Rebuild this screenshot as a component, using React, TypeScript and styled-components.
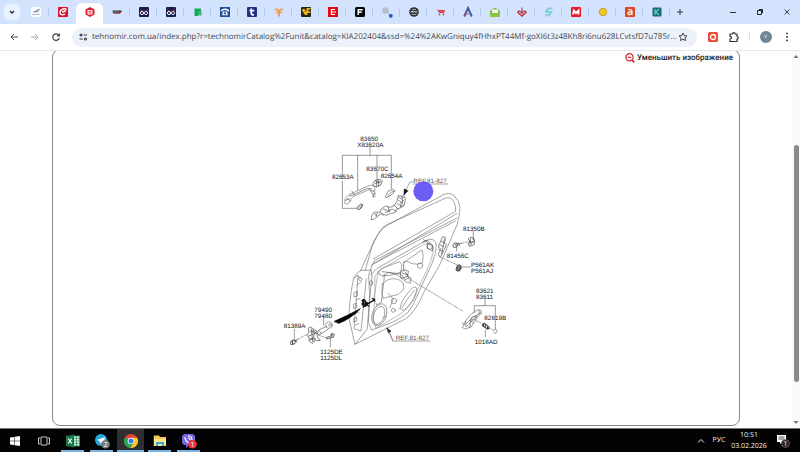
import React from "react";
import styled, { createGlobalStyle } from "styled-components";

const GlobalStyle = createGlobalStyle`
  * { box-sizing: border-box; }
  html, body { margin: 0; padding: 0; overflow: hidden; }
  body {
    background: #fff;
    font-family: "Open Sans", "Noto Sans", sans-serif;
    text-rendering: geometricPrecision;
  }
  button, input { text-rendering: inherit; }
  button { border: 0; padding: 0; background: none; font: inherit; color: inherit; }
`;

const Screen = styled.div`
  display: flex;
  flex-direction: column;
  height: 100vh;
`;

/* ---------- tab strip ---------- */

const TabStrip = styled.header`
  display: flex;
  align-items: stretch;
  height: 24px;
  flex: none;
  padding-left: 4px;
  background: #d3e3fd;
`;

const TabSearch = styled.button`
  align-self: center;
  display: grid;
  place-items: center;
  width: 16px;
  height: 16px;
  margin-right: 2px;
  border-radius: 5px;
  background: #e9f1fe;
`;

const TabList = styled.div`
  display: flex;
  flex: 0 1 648px;
  min-width: 0;
`;

const Tab = styled.button<{ $active?: boolean; $divider?: boolean }>`
  position: relative;
  display: grid;
  place-items: center;
  flex: 1 1 0;
  min-width: 0;
  margin-top: ${(p) => (p.$active ? "3px" : "0")};
  padding-bottom: ${(p) => (p.$active ? "3px" : "0")};
  border-radius: 6px 6px 0 0;
  background: ${(p) => (p.$active ? "#fff" : "transparent")};

  &::after {
    content: "";
    display: ${(p) => (p.$divider ? "block" : "none")};
    position: absolute;
    right: 0;
    top: 7px;
    width: 1px;
    height: 10px;
    background: #b3caf2;
  }
`;

const NewTab = styled.button`
  display: grid;
  place-items: center;
  width: 19px;
`;

const WindowButtons = styled.div`
  display: flex;
  margin-left: auto;
`;

const WindowButton = styled.button`
  display: grid;
  place-items: center;
  width: 27px;
`;

/* ---------- toolbar ---------- */

const Toolbar = styled.nav`
  display: flex;
  align-items: center;
  flex: none;
  height: 27px;
  padding: 0 3px;
  border-bottom: 1px solid #e4e8ee;
  background: #fff;
`;

const ToolButton = styled.button<{ $w?: number }>`
  display: grid;
  place-items: center;
  flex: none;
  width: ${(p) => p.$w ?? 21}px;
  height: 18px;
`;

const AddressBar = styled.div`
  display: flex;
  align-items: center;
  flex: 1;
  min-width: 0;
  height: 19px;
  margin: 0 5px 0 6px;
  padding: 0 9px 0 2px;
  border-radius: 10px;
  background: #edf2fa;
`;

const Address = styled.input`
  flex: 1;
  min-width: 0;
  padding: 0;
  border: 0;
  outline: 0;
  background: none;
  color: #44484d;
  font: 8px/16px "Open Sans", "Noto Sans", sans-serif;
  text-overflow: ellipsis;
`;

const ToolDivider = styled.span`
  width: 1px;
  height: 8px;
  margin: 0 5px;
  background: #c9dcfb;
`;

const Avatar = styled.span`
  display: grid;
  place-items: center;
  width: 12px;
  height: 12px;
  border-radius: 50%;
  background: #6d8796;
  color: #fff;
  font-size: 5px;
`;

/* ---------- page ---------- */

const Page = styled.main`
  display: flex;
  flex: 1;
  min-height: 0;
  overflow: hidden;
`;

const PageBody = styled.div`
  display: flex;
  flex: 1;
  min-width: 0;
  padding: 0 52px 2px;
`;

const Frame = styled.section`
  display: flex;
  flex-direction: column;
  flex: 1;
  min-width: 0;
  margin-top: -2px;
  border: 1px solid #8b8b8b;
  border-radius: 8px;
`;

const ShrinkButton = styled.button`
  display: flex;
  align-items: center;
  align-self: flex-end;
  gap: 2px;
  height: 14px;
  margin: 1px 6px 0 0;
  color: #1c1c1c;
  font: 500 8px/14px Roboto, "Open Sans", sans-serif;
`;

const Diagram = styled.svg`
  display: block;
  align-self: center;
  width: 270px;
  max-width: 100%;
  margin-top: 60px;
  font-family: "Liberation Sans", Arial, sans-serif;
  font-size: 19px;
`;

const ScrollBar = styled.aside`
  display: flex;
  flex-direction: column;
  align-items: center;
  width: 8px;
  padding: 3px 0;
  background: #fafafa;
`;

const ScrollTrack = styled.div`
  display: grid;
  grid-template-rows: 23fr 63fr 10fr;
  flex: 1;
  width: 5px;
`;

const ScrollThumb = styled.div`
  grid-row: 2;
  border-radius: 3px;
  background: #8a8a8a;
`;

/* ---------- taskbar ---------- */

const Taskbar = styled.footer`
  display: flex;
  align-items: stretch;
  flex: none;
  height: 24px;
  border-top: 1px solid #777;
  background: #030303;
  color: #f2f2f2;
`;

const TaskButton = styled.button<{ $running?: boolean; $active?: boolean }>`
  position: relative;
  display: grid;
  place-items: center;
  width: 29px;
  background: ${(p) => (p.$active ? "linear-gradient(90deg, transparent 1px, #2f2f31 1px, #2f2f31 28px, transparent 28px)" : "none")};

  &::after {
    content: "";
    display: ${(p) => (p.$running ? "block" : "none")};
    position: absolute;
    left: ${(p) => (p.$active ? "1px" : "3px")};
    right: ${(p) => (p.$active ? "1px" : "3px")};
    bottom: 0;
    height: 2px;
    background: #78b5e6;
  }
`;

const Tray = styled.div`
  display: flex;
  align-items: center;
  margin-left: auto;
  padding-right: 3px;
  font-size: 7px;
  line-height: 11px;
`;

const TrayButton = styled.button<{ $w: number }>`
  display: grid;
  place-items: center;
  width: ${(p) => p.$w}px;
  text-align: center;
`;

/* ---------- favicons ---------- */

const Fav = ({ children }: { children: React.ReactNode }) => (
  <svg width="12" height="12" viewBox="0 0 12 12" aria-hidden="true">{children}</svg>
);

const EyesIcon = () => (
  <Fav>
    <rect x="1" y="1" width="10" height="10" rx="1" fill="#16204e" />
    <circle cx="4" cy="7" r="1.6" fill="none" stroke="#fff" />
    <circle cx="8" cy="7" r="1.6" fill="none" stroke="#e9dfe9" />
    <path d="M2.600 4 5 5.200M7.400 5 9.800 3.600" stroke="#e33b4b" strokeWidth=".9" />
  </Fav>
);

const favicons: { name: string; icon: React.ReactNode }[] = [
  { name: "Каталог", icon: <Fav><rect x="1" y="1" width="10" height="10" fill="#fafbfc" /><path d="M3.500 6 9.500 3 7.700 6z" fill="#a5b0bd" stroke="#7b8794" strokeWidth=".7" /><path d="M1.700 8.500h8.500" stroke="#a9c0dc" /></Fav> },
  { name: "C", icon: <Fav><rect x="1" y="1" width="10" height="10" rx="1" fill="#d8122d" /><path d="M9.500 3.500C6.500 1.700 3 4 3 6.400c0 2.400 2.500 3 5 1.500M5 6l4-1.200" fill="none" stroke="#fff" strokeWidth="1.500" /></Fav> },
  { name: "Технoмир", icon: <Fav><path d="M6 1 10.500 3.400v5.200L6 11 1.500 8.600V3.400z" fill="#df1f2f" /><path d="M3.500 4h5v4.500h-5z" fill="#fff" /><path d="M4.500 5.300h3M4.500 7h3" stroke="#df1f2f" strokeWidth=".9" /></Fav> },
  { name: "BMP", icon: <Fav><path d="M1.500 4.500h9l-.5 2-1 1h-7z" fill="#34343b" /><path d="M5 7.500h3l3-2.500" fill="none" stroke="#d2404f" strokeWidth=".9" /><path d="M2 6h6" stroke="#a7a2a6" strokeWidth=".7" /></Fav> },
  { name: "Exist 1", icon: <EyesIcon /> },
  { name: "Exist 2", icon: <EyesIcon /> },
  { name: "Sheets", icon: <Fav><path d="M2.500 2.500h6.500V5H6v5H2.500z" fill="#13a85d" /><path d="M6 5h3.500v4.500H6z" fill="#35b475" /></Fav> },
  { name: "Телефон", icon: <Fav><rect x="1" y="1" width="10" height="10" fill="#1d4e96" /><path d="M2.500 5.500c0-3 7-3 7 0" fill="none" stroke="#fff" strokeWidth="1.300" /><path d="M3 9.300 4 5.500h4l1 3.800z" fill="#e9f0fb" /><circle cx="6" cy="7.300" r="1.100" fill="#1d4e96" /></Fav> },
  { name: "t", icon: <Fav><rect x="1" y="1" width="10" height="10" rx="1" fill="#262e82" /><path d="M5.300 2.500v5.200q0 1.400 2.700 1M3.500 4.600h4.700" fill="none" stroke="#fff" strokeWidth="1.700" /></Fav> },
  { name: "Пальма", icon: <Fav><path d="M6 4.500v6" stroke="#e88a3e" strokeWidth="1.600" /><path d="M6 4Q3 1 1.500 4q2-.6 4.500.6Q3 5 3 8q1-2 3-3 2 1 3 3 0-3-3-3.400Q8.500 3.400 10.500 4 9 1 6 4z" fill="#ee9c50" stroke="#ee9c50" strokeWidth=".6" /></Fav> },
  { name: "Авто", icon: <Fav><rect x="1" y="1" width="10" height="10" rx="1" fill="#2b2718" /><path d="M10.500 2H6.500v3L3 6.500 5 9h2.500l-.5-2h3.500V5.500H8.500v-2h2z" fill="#f1b91b" /><circle cx="3.800" cy="4.300" r="1.600" fill="#f1b91b" /></Fav> },
  { name: "Красный", icon: <Fav><rect x="1" y="1" width="10" height="10" fill="#e20a12" /><path d="M8 3.500H4.500v5H8M4.500 6H7" fill="none" stroke="#fff" strokeWidth="1.200" /><path d="M8 5v2" stroke="#fff" /></Fav> },
  { name: "F", icon: <Fav><rect x="1" y="1" width="10" height="10" rx="1.500" fill="#08090a" /><path d="M4.200 9V3.700h4.500M4.200 6.300h3.500" fill="none" stroke="#fff" strokeWidth="1.400" /></Fav> },
  { name: "Поиск деталей", icon: <Fav><circle cx="4.500" cy="4.500" r="2.700" fill="#ccd7df" stroke="#a1acb6" /><circle cx="4.500" cy="4.500" r="1" fill="none" stroke="#8e9daa" strokeWidth=".7" /><path d="m6.500 6.500 2 2" stroke="#8e9daa" /><circle cx="9.800" cy="9.800" r="1.900" fill="#1753ba" /></Fav> },
  { name: "Эмблема", icon: <Fav><circle cx="6" cy="6" r="4.800" fill="#303237" /><path d="M4 3.600h4M3.500 8.400h5" stroke="#c9cdc9" strokeWidth=".8" /><path d="M2.500 6.500 4 5l1 1.500L6.500 5 8 6.500 9.500 5" fill="none" stroke="#eee" /></Fav> },
  { name: "Корзина", icon: <Fav><path d="M2 3.500 4 4h6l-1 3H4.500z" fill="#d73840" /><path d="M4.500 7.500v1.700M8.500 7.500v1.700" stroke="#c93841" strokeWidth="1.400" /><path d="M4.500 5.500h4" stroke="#e98087" strokeWidth=".6" /></Fav> },
  { name: "A", icon: <Fav><path d="M2.200 10.500 6 2l3.800 8.500" fill="none" stroke="#2467bc" strokeWidth="2" /><path d="M6 2.500 2.700 10M4 8h3" fill="none" stroke="#d9354d" strokeWidth=".9" /></Fav> },
  { name: "Почта", icon: <Fav><path d="m1 5 5-3.500L11 5v6H1z" fill="#78b73b" /><path d="M3 3.500h6V7H3z" fill="#f4f6ed" /><path d="M1 6q5 4 10 0v5H1z" fill="#8ac63f" /></Fav> },
  { name: "Деталь", icon: <Fav><path d="M6 1.500v5.500M4 5l2 2.500L8 5" fill="none" stroke="#8a4b55" strokeWidth="1.200" /><path d="M3.500 4.500 2 6.500l4 3.500 4-3.500-1.500-2" fill="none" stroke="#cf2d36" strokeWidth="1.500" /></Fav> },
  { name: "S", icon: <Fav><path d="M9.500 2.500H5L3 6h5L6.500 9H2.500" fill="none" stroke="#66cddb" strokeWidth="1.600" /><path d="M4 2h6M2 10h5" stroke="#e9b6bd" strokeWidth=".8" /></Fav> },
  { name: "M", icon: <Fav><rect x="1" y="1" width="10" height="10" rx="1" fill="#e41b2d" /><path d="M3 8.500 4 4.500l2 2.500 2.500-2.500V8.500" fill="none" stroke="#fff" strokeWidth="1.900" /></Fav> },
  { name: "Золото", icon: <Fav><circle cx="6" cy="6" r="3.800" fill="#f5c51b" stroke="#bea343" /></Fav> },
  { name: "a", icon: <Fav><rect x="1" y="1" width="10" height="10" rx="1" fill="#dd4826" /><path d="M4 4q4-1 4 1v4M8 6C4 5.700 3.200 7 4 8.200q2 1.300 4-1" fill="none" stroke="#fff" strokeWidth="1.200" /></Fav> },
  { name: "K", icon: <Fav><rect x="1.500" y="1.500" width="9" height="9" rx="1" fill="#1d6870" /><path d="M4 3v6M8 3 4.800 6 8 9" fill="none" stroke="#4dd3ca" strokeWidth="1.300" /></Fav> },
];

/* ---------- parts diagram ---------- */

type LabelProps = { x: number; y: number; children: string };

const PartLabel = ({ x, y, children }: LabelProps) => (
  <text x={x} y={y} fill="#111">{children}</text>
);

const RefLink = ({ x, y, children }: LabelProps) => (
  <a href="#ref-81-827">
    <text x={x} y={y} fill="#555">{children}</text>
    <path d={`M${x - 2} ${y + 4}h106`} stroke="#777" strokeWidth="2" />
  </a>
);

const DoorDiagram = () => (
  <Diagram viewBox="0 0 810 735" role="img" aria-label="Схема задней двери">
    <g fill="none" stroke="#777" strokeWidth="2" strokeLinejoin="round" strokeLinecap="round">
      {/* outside handle */}
      <g transform="translate(177 0)">
        <path d="M150 67v24M67 161V91h147v100M113 91v105M171 91v75M67 168v82h43" stroke="#666" />
        <path d="M75 228c-2-8 5-14 14-20l55-25q10-5 18 0l4 12q-3 7-10 3l-9-4-48 21-10 13-6 10-8-3z" />
        <path d="m88 213 14-4 40-19 13 2M83 221l10 7M151 195l8 15 7-4-5-10M103 208l-7-9M76 226l10-4" stroke="#555" />
        <path d="m160 175 5-9 14-3 8 4-4 12-13 7-10-5zM167 169l14 4M166 176l14-6M170 184v-16M176 183v-18" stroke="#444" />
        <path d="m197 213 7-14 14-6 7 4-9 12-17 9zM204 211l11-10 7-2M162 205l-3 12 7-4" stroke="#555" />
        <path d="m112 246 9-9 8 2-5 10-9 5zM116 247l9-8M120 252l6-10" stroke="#444" />
        <path d="m156 271 7-10 17 1 4-10 12-9 15 4 11-5 9-13 4-18 9 3 6-3 6 9-2 17-7 9-18 7-4 10-13 2-14 6-12-5-12 6-10 10-10 2z" stroke="#555" />
        <path d="m164 265 9 11M181 262l9 9M190 252l13 5 14-4 12 6M204 246l5 14M222 240l13 13M235 225l10 8-5 12 13-5M236 217l9 4 7-5M242 233l9-7M232 236l12 7M246 214l2 22M196 262l13-4M173 264l-6 9" stroke="#555" />
        <path d="M278 171h-8l-14 27" />
        <path d="m252 209 1-17 10 5z" fill="#111" stroke="#111" />
      </g>
      {/* door panel */}
      <g transform="translate(237 180)">
        <path d="M62 256 90 195l23-45q12-21 32-31L312 28q18-7 31 5 16 15 17 34-1 27-9 52l-28 66-24 55-47 81q-17 42-42 70-11 11-30 19L45 478 27 400q0-52 14-121 10-18 21-23z" />
        <path d="m76 255 24-84 21-34q7-12 18-17L315 40q16-5 23 5 9 10 9 34L100 222M91 254l12-27 248-128M93 241 350 86M103 235 346 108" />
        <path d="m92 270 18-19 128-73q16-12 30-15 18-2 21 17 0 25-13 55l-42 92q-12 32-30 55-20 17-47 30l-62 23-10-23 4-70 7-69-3-20" />
        <path d="m105 273 14-17 118-69q20-15 35-12 11 5 7 27-4 24-18 53l-36 75q-15 36-44 57l-73 43-8-27 5-84zM115 258l-13 78 9 27" stroke="#999" />
        <path d="M62 256h30l-6 14 3 62-7 100-37 46M42 279l12-8 7 10M54 272 42 431l21 7 16-157M43 323l9-4v14l-9 3zM42 357l8-2v13l-8 2zM43 399l7-2v11l-8 3zM61 277l7 5-6 6-7-5zM50 300l13-8M48 345l12-5M47 386l11-5M46 420l10-4" />
        <path d="m117 267q-2-13 13-19l49-18 7 10-4 22-35 10-22-1zM193 231l52-36q7 10 2 39-12 6-31 2l-15-7zM127 297q14-16 35-16 15 0 27 12l3 19-17 16-46 12q-6-19-2-43zM128 276l18-14 26 8 28 22 13 2" />
        <path d="M180 370q4-25 20-42l18-20q10-5 12 3-1 22-11 37l-20 22q-13 11-19 0zM187 367l14-23 22-28M134 268l-10 84-15 8M145 325l15 18-11 25" />
        <ellipse cx="118" cy="389" rx="21" ry="34" transform="rotate(20 118 389)" /><ellipse cx="117" cy="391" rx="16" ry="28" transform="rotate(20 117 391)" />
        <circle cx="162" cy="348" r="8" /><circle cx="160" cy="376" r="6" /><circle cx="240" cy="242" r="8" /><circle cx="269" cy="185" r="8" /><ellipse cx="93" cy="294" rx="5" ry="7" />
        <path d="m182 260 11-6 13 5-5 16-17 5zM185 270l11 15 10-7-11-18M186 264l19 6M191 231v26M201 273l13 7-4 10M127 260l55 7M263 174l15 8-1 16-14-8zM249 173l13-8 8 8M250 164l12 7" stroke="#555" />
        <path d="m309 155 8 3-4 17 7 4-18 36-8-6 8-18-6-4zM304 169l10 5M300 180l12 5M296 193l12 6M313 162l-8 45" stroke="#555" />
        <path d="M205 280 368 378M298 215l59 27" strokeDasharray="12 4 3 4" />
        <path d="m66 347 6-4 6 9 8 3 16-10M68 350l2 16 8-7 8 4M72 343l-2 22M77 348v16M66 357h17M97 341l7 2-2 5" stroke="#111" strokeWidth="4" />
        <path d="M159 465 143 434" />
        <path d="m141 429 12 10-7 4z" fill="#111" stroke="#111" />
      </g>
      {/* latch, bolts and inside handle */}
      <g transform="translate(507 270)">
        <path d="M130 49v25M80 108v-12M95 156h26M165 253v19M133 293v-21h63v71M166 365v-20" stroke="#666" />
        <path d="m69 88 7-5 6 3-1 9-8 3zM82 88l12-3M74 85l5 9M80 84l4 9M86 84l3 7" stroke="#333" />
        <path d="m95 85 24-7" strokeDasharray="7 4" />
        <path d="M115 71q8-9 17-1l1 19-15 5-4-9 7-4zM129 73l6 5M122 72l-2 14M118 81h14M121 90l8-11" stroke="#444" />
        <ellipse cx="86" cy="159" rx="7" ry="10" fill="#999" stroke="#333" transform="rotate(24 86 159)" /><path d="m84 152-3 15M91 153l-4 15" stroke="#222" />
        <path d="m101 329 8-15 16-18 18-12 10 2 1 9-13 13-17 27-17 7-9-4zM109 326l19-19 24-14M120 338l2-24M130 323l-8-5M108 335l-1-16M125 307q7-5 17-3l-6 10-13 1zM97 324l8 6M147 286v13M112 333l28-31" stroke="#666" />
        <path d="m138 317 21 10M176 339l15 7" strokeDasharray="6 4" />
        <path d="m158 329 6-4 14 12-4 6-14-9zM162 325l-2 8M168 328l-3 8M174 334l-3 7" stroke="#222" strokeWidth="3" />
        <path d="m190 347 7-5 5 4-4 8q-5 3-8-1" />
      </g>
      {/* hinge check arm */}
      <g transform="translate(27 495)">
        <path d="M161 81v25M73 118v33M181 171v-27" stroke="#666" />
        <path d="m193 94 39-18 39-20q-25 28-64 44z" fill="#050505" stroke="#050505" />
        <circle cx="177" cy="105" r="10" /><circle cx="180" cy="105" r="4" /><path d="m170 109-24 11-5 9 6 6 28-18M148 122l5 8" stroke="#555" />
        <path d="m116 114 7-4 6 7 10 5 4 20 8 9-15 1-9 8-10-7v-12l-7-5 6-8zM121 124l12 1-2 18-11 4M124 116l4 39M117 137l21-7M120 149l14-3M129 120l9 9" stroke="#444" /><circle cx="128" cy="125" r="3" /><circle cx="132" cy="147" r="4" />
        <path d="m62 155 9-5 7 5-5 7-9 2zM65 153l5 9M73 153l10-5M68 150v12M77 151l3 5" stroke="#222" />
        <path d="m83 148 25-14" strokeDasharray="8 4" />
        <path d="m170 142 13-4 1-7 9 2-3 9-19 4zM186 132v9" stroke="#222" /><path d="m146 136 22 7" strokeDasharray="6 4" />
      </g>
      <path d="M402 648h-7l-14-34" />
    </g>

    <PartLabel x={298} y={47}>83650</PartLabel>
    <PartLabel x={289} y={65}>X83620A</PartLabel>
    <PartLabel x={316} y={138}>83670C</PartLabel>
    <PartLabel x={213} y={163}>82653A</PartLabel>
    <PartLabel x={359} y={158}>82654A</PartLabel>
    <PartLabel x={606} y={319}>81350B</PartLabel>
    <PartLabel x={557} y={399}>81456C</PartLabel>
    <PartLabel x={630} y={427}>P561AK</PartLabel>
    <PartLabel x={630} y={445}>P561AJ</PartLabel>
    <PartLabel x={645} y={505}>83621</PartLabel>
    <PartLabel x={645} y={523}>83611</PartLabel>
    <PartLabel x={670} y={586}>82619B</PartLabel>
    <PartLabel x={641} y={657}>1018AD</PartLabel>
    <PartLabel x={160} y={561}>79490</PartLabel>
    <PartLabel x={160} y={579}>79480</PartLabel>
    <PartLabel x={68} y={610}>81389A</PartLabel>
    <PartLabel x={178} y={686}>1125DE</PartLabel>
    <PartLabel x={178} y={704}>1125DL</PartLabel>
    <RefLink x={457} y={173}>REF.81-827</RefLink>
    <RefLink x={404} y={644}>REF.81-827</RefLink>
    <circle cx="487" cy="199" r="30" fill="#6d5df4" />
  </Diagram>
);

const url =
  "tehnomir.com.ua/index.php?r=technomirCatalog%2Funit&catalog=KIA202404&ssd=%24%2AKwGniquy4fHhxPT44Mf-goXI6t3z48Kh8ri6nu628LCvtsfD7u785r...";

export default function App() {
  return (
    <Screen>
      <GlobalStyle />
      <TabStrip>
        <TabSearch aria-label="Поиск вкладок">
          <svg width="8" height="8" viewBox="0 0 8 8" fill="none" stroke="#26313f" strokeWidth="1.300"><path d="m2 3 2 2 2-2" /></svg>
        </TabSearch>
        <TabList>
          {favicons.map((f, i) => (
            <Tab key={f.name} aria-label={f.name} $active={i === 2} $divider={i !== 1 && i !== 2}>{f.icon}</Tab>
          ))}
        </TabList>
        <NewTab aria-label="Новая вкладка">
          <svg width="8" height="8" viewBox="0 0 8 8" stroke="#333b47"><path d="M4 1v6M1 4h6" /></svg>
        </NewTab>
        <WindowButtons>
          <WindowButton aria-label="Свернуть"><svg width="8" height="8" viewBox="0 0 8 8" stroke="#333"><path d="M1 4.500h6" /></svg></WindowButton>
          <WindowButton aria-label="Восстановить"><svg width="8" height="8" viewBox="0 0 8 8" fill="none" stroke="#222"><path d="M1.500 2.500h4v4h-4zM3 1.500h3.500V5" /></svg></WindowButton>
          <WindowButton aria-label="Закрыть"><svg width="8" height="8" viewBox="0 0 8 8" stroke="#333" strokeWidth=".9"><path d="m1.500 1.500 5 5M6.500 1.500l-5 5" /></svg></WindowButton>
        </WindowButtons>
      </TabStrip>

      <Toolbar>
        <ToolButton aria-label="Назад"><svg width="10" height="10" viewBox="0 0 10 10" fill="none" stroke="#444"><path d="M9 5H2M5 2 2 5l3 3" /></svg></ToolButton>
        <ToolButton aria-label="Вперёд"><svg width="10" height="10" viewBox="0 0 10 10" fill="none" stroke="#aaa"><path d="M1 5h7M5 2l3 3-3 3" /></svg></ToolButton>
        <ToolButton aria-label="Обновить"><svg width="10" height="10" viewBox="0 0 10 10" fill="none" stroke="#444" strokeWidth="1.200"><path d="M8 3.500A3.300 3.300 0 1 0 8.300 6M8.300 1.500V4H5.800" /></svg></ToolButton>
        <AddressBar>
          <ToolButton $w={18} aria-label="Сведения о сайте">
            <svg width="10" height="10" viewBox="0 0 10 10" fill="none" stroke="#3d4045" strokeWidth="1.100"><circle cx="3" cy="3" r="1" /><path d="M5.500 3H9M1.500 7H5" /><circle cx="7.500" cy="7" r="1" /></svg>
          </ToolButton>
          <Address aria-label="Адресная строка" defaultValue={url} />
          <ToolButton $w={10} aria-label="Добавить в закладки">
            <svg width="10" height="10" viewBox="0 0 10 10" fill="none" stroke="#333" strokeWidth=".9"><path d="m5 1 1.200 2.600 2.800.3L7 5.800 7.500 8.600 5 7.200 2.500 8.600 3 5.800 1 3.900l2.800-.3z" /></svg>
          </ToolButton>
        </AddressBar>
        <ToolButton aria-label="Расширение">
          <svg width="10" height="10" viewBox="0 0 10 10"><rect width="10" height="10" rx="1.500" fill="#ed4b36" /><circle cx="5" cy="5" r="2.500" fill="none" stroke="#fff" strokeWidth="1.300" /></svg>
        </ToolButton>
        <ToolButton aria-label="Расширения">
          <svg width="12" height="12" viewBox="0 0 12 12" fill="none" stroke="#333" strokeWidth="1.200"><path d="M2 3h2.500a1.300 1.300 0 0 1 2.600 0H9v2.500a1.300 1.300 0 0 1 0 2.600v2.400H2V8q1.500-.1 1.500-1.300T2 5.500z" /></svg>
        </ToolButton>
        <ToolDivider />
        <ToolButton aria-label="Профиль"><Avatar>V</Avatar></ToolButton>
        <ToolButton aria-label="Меню"><svg width="4" height="10" viewBox="0 0 4 10" fill="#333"><circle cx="2" cy="1.500" r=".9" /><circle cx="2" cy="5" r=".9" /><circle cx="2" cy="8.500" r=".9" /></svg></ToolButton>
      </Toolbar>

      <Page>
        <PageBody>
          <Frame>
            <ShrinkButton>
              <svg width="10" height="10" viewBox="0 0 10 10" fill="none" stroke="#d5202f" strokeWidth="1.200"><circle cx="4.500" cy="4.300" r="3.600" /><path d="M2.800 4.300h3.400" /><path d="m7 7 2.300 2.300" strokeWidth="1.700" /></svg>
              Уменьшить изображение
            </ShrinkButton>
            <DoorDiagram />
          </Frame>
        </PageBody>
        <ScrollBar>
          <svg width="6" height="5" viewBox="0 0 6 5" fill="#777"><path d="m3 1 2.500 3h-5z" /></svg>
          <ScrollTrack><ScrollThumb /></ScrollTrack>
          <svg width="6" height="5" viewBox="0 0 6 5" fill="#777"><path d="M3 4 .5 1h5z" /></svg>
        </ScrollBar>
      </Page>

      <Taskbar>
        <TaskButton aria-label="Пуск"><svg width="10" height="10" viewBox="0 0 10 10" fill="#fff"><path d="m0 1.500 4-.6v3.800H0zM4.500.8 10 0v4.700H4.500zM0 5.200h4V9l-4-.6zM4.500 5.200H10V10l-5.500-.8z" /></svg></TaskButton>
        <TaskButton aria-label="Представление задач"><svg width="12" height="10" viewBox="0 0 12 10" fill="none" stroke="#ddd" strokeWidth=".9"><path d="M3 1h6v8H3zM2 2H.5v6H2M10 2h1.500v6H10" /></svg></TaskButton>
        <TaskButton $running aria-label="Excel"><svg width="14" height="14" viewBox="0 0 14 14"><path d="M7 2h6.500v10H7z" fill="#e4f4eb" stroke="#2e8e5d" /><path d="M8 4.500h5M8 7h5M8 9.500h5M10.500 2v10" stroke="#2e8e5d" strokeWidth=".8" /><path d="m0 2 8-1.500v13L0 12z" fill="#17764a" /><path d="m2.200 4.500 3.600 5M5.800 4.500l-3.600 5" stroke="#fff" strokeWidth="1.200" /></svg></TaskButton>
        <TaskButton $running aria-label="Telegram"><svg width="16" height="16" viewBox="0 0 16 16"><circle cx="7" cy="7" r="6" fill="#28a5df" /><path d="m3 7 8-3-1.500 7-2-1.600-1.500 1L5.700 8z" fill="#fff" /><circle cx="11.500" cy="11.300" r="4.300" fill="#777b80" /><text x="11.500" y="13.800" textAnchor="middle" fontSize="7" fill="#fff">2</text></svg></TaskButton>
        <TaskButton $running $active aria-label="Chrome"><svg width="14" height="14" viewBox="0 0 14 14"><circle cx="7" cy="7" r="7" fill="#e24134" /><path d="M7 7 .9 3.500A7 7 0 0 0 6.300 14L10 8.700z" fill="#24a653" /><path d="M7 3.800h6.200A7 7 0 0 1 6.300 14L10 8.700z" fill="#fbc81d" /><circle cx="7" cy="7" r="3.300" fill="#fff" /><circle cx="7" cy="7" r="2.500" fill="#3277e8" /></svg></TaskButton>
        <TaskButton $running aria-label="Проводник"><svg width="14" height="14" viewBox="0 0 14 14"><path d="M.8 1.500H6L7 3h6v9H.8z" fill="#f4cc59" /><path d="M1 5h12v7H1z" fill="#ffe68f" /><path d="M3 12V8h8v4H9v-2H5v2z" fill="#3ea5d9" /></svg></TaskButton>
        <TaskButton $running aria-label="Viber"><svg width="16" height="16" viewBox="0 0 16 16"><path d="M3 1h9l2 2v7l-2 2H8l-3 3v-3H3l-2-2V3z" fill="#7764df" /><path d="M4 4q0 5 5 6M7 3q4 0 4 4M7 5q2 0 2 2" fill="none" stroke="#fff" strokeWidth="1.200" /><circle cx="11.500" cy="11.300" r="4.300" fill="#ef3438" /><text x="11.500" y="13.800" textAnchor="middle" fontSize="7" fill="#fff">1</text></svg></TaskButton>
        <Tray>
          <TrayButton $w={16} aria-label="Скрытые значки"><svg width="8" height="6" viewBox="0 0 8 6" fill="none" stroke="#eee"><path d="m1 4.500 3-3 3 3" /></svg></TrayButton>
          <TrayButton $w={20}>РУС</TrayButton>
          <TrayButton $w={40}><time dateTime="2026-02-03T10:51">10:51<br />03.02.2026</time></TrayButton>
          <TrayButton $w={28} aria-label="Уведомления"><svg width="14" height="14" viewBox="0 0 14 14"><path d="M1 1h9v7H6l-2 2V8H1z" fill="#fff" /><path d="M2.500 3h6M2.500 5h6" stroke="#222" strokeWidth=".8" /><circle cx="9.500" cy="9.500" r="4" fill="#242424" stroke="#777" strokeWidth=".7" /><text x="9.500" y="12" textAnchor="middle" fontSize="7" fill="#fff">1</text></svg></TrayButton>
        </Tray>
      </Taskbar>
    </Screen>
  );
}
